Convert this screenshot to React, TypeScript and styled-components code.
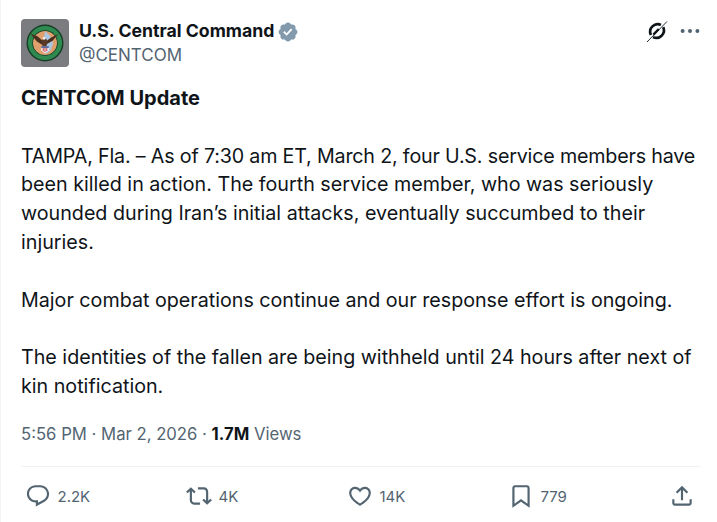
import React from "react";
import styled, { createGlobalStyle } from "styled-components";

const Global = createGlobalStyle`
  html, body { margin: 0; padding: 0; background: #fff; }
  body { font-family: "Inter", "Liberation Sans", sans-serif; }
`;

const Page = styled.main`
  width: 717px;
  height: 522px;
  box-sizing: border-box;
  padding: 19px 17px 0 20px;
  overflow: hidden;
  color: #0f1419;
  background: #fff;
  border-left: 1px solid #f3f4f5;
`;

const Header = styled.header`
  display: flex;
  align-items: flex-start;
  height: 48px;
`;

const Avatar = styled.div`
  width: 48px;
  height: 48px;
  border-radius: 4px;
  background: #7b7c80;
  display: flex;
  align-items: center;
  justify-content: center;
  flex: none;
`;

const Identity = styled.div`
  margin-left: 10px;
  flex: 1;
  display: flex;
  flex-direction: column;
`;

const NameRow = styled.div`
  display: flex;
  align-items: center;
  gap: 3px;
  height: 24px;
`;

const Name = styled.span`
  font-size: 17.7px;
  font-weight: 700;
  line-height: 24px;
`;

const VerifiedSlot = styled.span`
  display: flex;
  margin-top: 1px;
`;

const Handle = styled.span`
  font-size: 17px;
  line-height: 24px;
  color: #536471;
`;

const TopActions = styled.div`
  display: flex;
  align-items: center;
  gap: 11px;
  height: 24px;
`;

const Body = styled.div`
  margin-top: 17px;
  font-size: 19.7px;
  line-height: 28.8px;
  margin-right: 3px;
`;

const Lead = styled.p`
  margin: 0 0 28.8px;
  font-weight: 700;
  font-size: 20px;
`;

const Para = styled.p`
  margin: 0 0 28.8px;
`;

const TightRun = styled.span`
  letter-spacing: -0.18px;
`;

const Meta = styled.div`
  margin-top: -7.4px;
  font-size: 16.7px;
  line-height: 24px;
  color: #536471;
  strong { color: #0f1419; font-weight: 700; }
`;

const Divider = styled.hr`
  margin: 20px 0 0;
  border: 0;
  border-top: 1px solid #eff3f4;
`;

const Actions = styled.div`
  display: flex;
  align-items: center;
  height: 58px;
  padding-left: 4px;
`;

const Action = styled.div`
  display: flex;
  align-items: center;
  gap: 6.5px;
  width: 161px;
  font-size: 15px;
  color: #536471;
  svg { flex: none; }
  &:last-child { width: 26px; }
`;

const Icon = ({ d, size = 26, color = "#536471" }: { d: string; size?: number; color?: string }) => (
  <svg viewBox="0 0 24 24" width={size} height={size} fill={color} aria-hidden="true">
    <path d={d} />
  </svg>
);

const icons = {
  reply: "M1.751 10c0-4.42 3.584-8 8.005-8h4.366c4.49 0 8.129 3.64 8.129 8.13 0 2.96-1.607 5.68-4.196 7.11l-8.054 4.46v-3.69h-.067c-4.49.1-8.183-3.51-8.183-8.01zm8.005-6c-3.317 0-6.005 2.69-6.005 6 0 3.37 2.77 6.08 6.138 6.01l.351-.01h1.761v2.3l5.087-2.81c1.951-1.08 3.163-3.13 3.163-5.36 0-3.39-2.744-6.13-6.129-6.13H9.756z",
  retweet: "M4.5 3.88l4.432 4.14-1.364 1.46L5.5 7.55V16c0 1.1.896 2 2 2H13v2H7.5c-2.209 0-4-1.79-4-4V7.55L1.432 9.48.068 8.02 4.5 3.88zM16.5 6H11V4h5.5c2.209 0 4 1.79 4 4v8.45l2.068-1.93 1.364 1.46-4.432 4.14-4.432-4.14 1.364-1.46 2.068 1.93V8c0-1.1-.896-2-2-2z",
  like: "M16.697 5.5c-1.222-.06-2.679.51-3.89 2.16l-.805 1.09-.806-1.09C9.984 6.01 8.526 5.44 7.304 5.5c-1.243.07-2.349.78-2.91 1.91-.552 1.12-.633 2.78.479 4.82 1.074 1.97 3.257 4.27 7.129 6.61 3.87-2.34 6.052-4.64 7.126-6.61 1.111-2.04 1.03-3.7.477-4.82-.561-1.13-1.666-1.84-2.908-1.91zm4.187 7.69c-1.351 2.48-4.001 5.12-8.379 7.67l-.503.3-.504-.3c-4.379-2.55-7.029-5.19-8.382-7.67-1.36-2.5-1.41-4.86-.514-6.67.887-1.79 2.647-2.91 4.601-3.01 1.651-.09 3.368.56 4.798 2.01 1.429-1.45 3.146-2.1 4.796-2.01 1.954.1 3.714 1.22 4.601 3.01.896 1.81.846 4.17-.514 6.67z",
  bookmark: "M4 4.5C4 3.12 5.119 2 6.5 2h11C18.881 2 20 3.12 20 4.5v18.44l-8-5.71-8 5.71V4.5zM6.5 4c-.276 0-.5.22-.5.5v14.56l6-4.29 6 4.29V4.5c0-.28-.224-.5-.5-.5h-11z",
  share: "M12 2.59l5.7 5.7-1.41 1.42L13 6.41V16h-2V6.41l-3.3 3.3-1.41-1.42L12 2.59zM21 15l-.02 3.51c0 1.38-1.12 2.49-2.5 2.49H5.5C4.11 21 3 19.88 3 18.5V15h2v3.5c0 .28.22.5.5.5h12.98c.28 0 .5-.22.5-.5L19 15h2z",
  verified: "M22.25 12c0-1.43-.88-2.67-2.19-3.34.46-1.39.2-2.9-.81-3.91s-2.52-1.27-3.91-.81c-.66-1.31-1.91-2.19-3.34-2.19s-2.67.88-3.33 2.19c-1.4-.46-2.91-.2-3.92.81s-1.26 2.52-.8 3.91c-1.31.67-2.2 1.91-2.2 3.34s.89 2.67 2.2 3.34c-.46 1.39-.21 2.9.8 3.91s2.52 1.26 3.91.81c.67 1.31 1.91 2.19 3.34 2.19s2.68-.88 3.34-2.19c1.39.45 2.9.2 3.91-.81s1.27-2.52.81-3.91c1.31-.67 2.19-1.91 2.19-3.34zm-11.71 4.2L6.8 12.46l1.41-1.42 2.26 2.26 4.8-5.23 1.47 1.36-6.2 6.77z",
};

const Seal = () => (
  <svg viewBox="0 0 40 40" width="38" height="38" aria-hidden="true">
    <circle cx="20" cy="20" r="19.5" fill="#163c26" />
    <circle cx="20" cy="20" r="18" fill="#2f8a50" />
    <circle cx="20" cy="20" r="13.4" fill="#163c26" />
    <circle cx="20" cy="20" r="12.6" fill="#dfa06e" />
    <path d="M20 7.5l5 4.5 3.6 8-3 8.5-5 3-3-8z" fill="#a9c6e2" />
    <path d="M4.5 10l8 3.2 6 5.6-1 3.2-6-3.5zM34 10.5l-8 4-5 4 1 2.5 6-3.5z" fill="#4a2f1e" />
    <ellipse cx="19.5" cy="19.5" rx="2.8" ry="4.4" fill="#5a3a26" />
    <circle cx="19" cy="15" r="1.6" fill="#efe9df" />
    <path d="M16 23.5h8v4.5l-4 3-4-3z" fill="#f3f3f3" />
    <path d="M16 23.5h8v1.5h-8z" fill="#2c3f7d" />
    <path d="M17.6 25.2h1v3.6h-1zM19.5 25.2h1v4.6h-1zM21.4 25.2h1v3.6h-1z" fill="#c03a3a" />
  </svg>
);

const GrokMark = () => (
  <svg viewBox="0 0 24 24" width="24" height="24" fill="none" aria-hidden="true">
    <path d="M16 5.9A7.6 7.6 0 0 0 5.9 16" stroke="#0f1419" strokeWidth="2.7" />
    <path d="M8 18.1a7.6 7.6 0 0 0 10.2-10" stroke="#0f1419" strokeWidth="2.7" />
    <path d="M2 23L22 2.5" stroke="#0f1419" strokeWidth="0.9" />
    <path d="M8.4 15.6l5.4-5.6" stroke="#0f1419" strokeWidth="2.4" />
  </svg>
);

const Dots = () => (
  <svg viewBox="0 0 20 20" width="20" height="20" fill="#536471" aria-hidden="true">
    <circle cx="2.6" cy="10" r="2" />
    <circle cx="10" cy="10" r="2" />
    <circle cx="17.4" cy="10" r="2" />
  </svg>
);

export default function App() {
  return (
    <Page>
      <Global />
      <Header>
        <Avatar>
          <Seal />
        </Avatar>
        <Identity>
          <NameRow>
            <Name>U.S. Central Command</Name>
            <VerifiedSlot>
              <Icon d={icons.verified} size={22} color="#829aab" />
            </VerifiedSlot>
          </NameRow>
          <Handle>@CENTCOM</Handle>
        </Identity>
        <TopActions>
          <GrokMark />
          <Dots />
        </TopActions>
      </Header>
      <Body>
        <Lead>CENTCOM Update</Lead>
        <Para>
          <TightRun>TAMPA, Fla. – As of 7:30 am ET, March 2, four U.S. service members have</TightRun> been killed in action. The fourth service member, who was seriously wounded during Iran’s initial attacks, eventually succumbed to their injuries.
        </Para>
        <Para>Major combat operations continue and our response effort is ongoing.</Para>
        <Para>The identities of the fallen are being withheld until 24 hours after next of kin notification.</Para>
      </Body>
      <Meta>
        5:56 PM · Mar 2, 2026 · <strong>1.7M</strong> Views
      </Meta>
      <Divider />
      <Actions>
        <Action><Icon d={icons.reply} />2.2K</Action>
        <Action><Icon d={icons.retweet} />4K</Action>
        <Action><Icon d={icons.like} />14K</Action>
        <Action><Icon d={icons.bookmark} />779</Action>
        <Action><Icon d={icons.share} /></Action>
      </Actions>
    </Page>
  );
}
